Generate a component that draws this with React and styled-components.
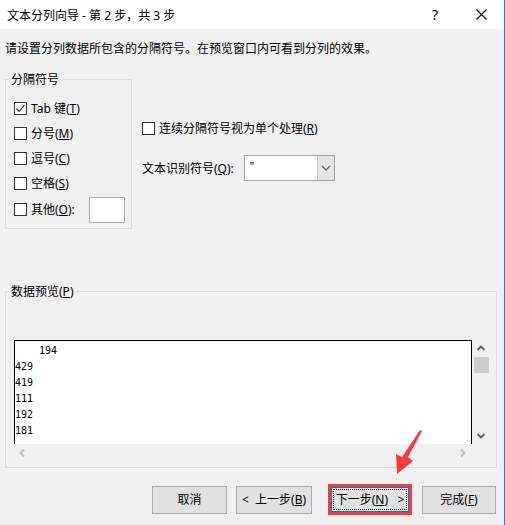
import styled, { createGlobalStyle } from 'styled-components';

const GlobalStyle = createGlobalStyle`
  html, body {
    margin: 0;
    padding: 0;
    background: #ffffff;
  }
  body {
    font-family: "Noto Sans", "Noto Sans CJK SC", sans-serif;
    font-size: 12px;
    color: #000;
  }
`;

const Window = styled.div`
  position: relative;
  width: 504px;
  height: 525px;
  background: #f0f0f0;
  border-right: 1px solid #1883d7;
  display: flex;
  flex-direction: column;
  overflow: hidden;
`;

const TitleBar = styled.div`
  height: 29px;
  background: #ffffff;
  display: flex;
  align-items: center;
  padding-left: 7px;
  line-height: 17px;
`;

const TitleText = styled.div`
  flex: 1;
  padding-top: 1px;
`;

const TitleButton = styled.div`
  width: ${({ $w }) => $w}px;
  display: flex;
  justify-content: center;
  align-items: center;
  font-size: 14px;
`;

const Body = styled.div`
  flex: 1;
  display: flex;
  flex-direction: column;
  padding: 0 7px 0 5px;
`;

const Intro = styled.div`
  margin-top: 11px;
  line-height: 17px;
`;

const TopSection = styled.div`
  display: flex;
  margin-top: 14px;
`;

const Group = styled.fieldset`
  margin: 0;
  padding: ${({ $pad }) => $pad};
  border: 1px solid #dcdcdc;
  min-inline-size: 0;
  width: ${({ $w }) => $w};
  box-sizing: border-box;
`;

const Legend = styled.legend`
  padding: 0 2px;
  margin-left: -5px;
  line-height: 17px;
`;

const OptionList = styled.div`
  display: flex;
  flex-direction: column;
  padding-top: 8px;
`;

const OptionRow = styled.label`
  display: flex;
  align-items: center;
  height: ${({ $h }) => $h || 25}px;
  gap: 4px;
  line-height: 17px;
`;

const Box = styled.span`
  width: 13px;
  height: 13px;
  box-sizing: border-box;
  border: 1px solid #333333;
  background: #ffffff;
  display: inline-flex;
  align-items: center;
  justify-content: center;
  flex-shrink: 0;
`;

const SmallInput = styled.div`
  width: 36px;
  height: 26px;
  box-sizing: border-box;
  border: 1px solid #adadad;
  background: #ffffff;
  margin-left: auto;
  margin-right: -2px;
`;

const RightColumn = styled.div`
  margin-left: 10px;
  padding-top: 47px;
  display: flex;
  flex-direction: column;
`;

const QualifierRow = styled.div`
  display: flex;
  align-items: center;
  gap: 10px;
  margin-top: 17px;
  line-height: 17px;
`;

const Combo = styled.div`
  width: 91px;
  height: 26px;
  box-sizing: border-box;
  border: 1px solid #a0a0a0;
  background: #ffffff;
  display: flex;
`;

const ComboValue = styled.div`
  flex: 1;
  padding-left: 5px;
  line-height: 22px;
  color: #000000;
  font-family: "Liberation Sans", sans-serif;
`;

const ComboButton = styled.div`
  width: 16px;
  background: #e5e5e5;
  border-left: 1px solid #cccccc;
  display: flex;
  align-items: center;
  justify-content: center;
`;

const PreviewGroup = styled(Group)`
  margin-top: 54px;
`;

const PreviewFrame = styled.div`
  display: flex;
  flex-direction: column;
  padding-top: 40px;
`;

const PreviewMain = styled.div`
  display: flex;
  height: 104px;
`;

const DataBox = styled.div`
  flex: 1;
  background: #ffffff;
  border: 1px solid #000000;
  border-bottom: none;
  padding-top: 2px;
  font-family: "DejaVu Sans Mono", monospace;
  font-size: 10px;
  line-height: 16px;
  white-space: pre;
`;

const VScroll = styled.div`
  width: 16px;
  display: flex;
  flex-direction: column;
  align-items: center;
  padding-left: 1px;
`;

const ScrollArrow = styled.div`
  height: ${({ $h }) => $h}px;
  width: 16px;
  display: flex;
  align-items: center;
  justify-content: center;
`;

const Thumb = styled.div`
  width: 15px;
  height: 16px;
  background: #cdcdcd;
`;

const ScrollGap = styled.div`
  flex: 1;
`;

const HScroll = styled.div`
  height: 17px;
  display: flex;
  align-items: center;
  justify-content: space-between;
  padding: 0 22px 0 4px;
  margin-right: -1px;
`;

const ButtonRow = styled.div`
  display: flex;
  justify-content: flex-end;
  align-items: center;
  margin-top: 16px;
  padding-right: 1px;
`;

const Button = styled.div`
  width: ${({ $w }) => $w}px;
  height: 28px;
  box-sizing: border-box;
  background: #e1e1e1;
  border: 1px solid ${({ $default }) => ($default ? '#0078d7' : '#adadad')};
  display: flex;
  align-items: center;
  justify-content: center;
  line-height: 17px;
  white-space: pre;
  margin-left: ${({ $ml }) => $ml || 0}px;
`;

const Highlight = styled.div`
  border: 3px solid #f53a3a;
  margin-left: 16px;
  margin-right: 10px;
`;

const FocusButton = styled(Button)`
  height: 25px;
  width: 78px;
  position: relative;
  &::after {
    content: '';
    position: absolute;
    inset: 1px;
    border: 1px dotted #000000;
  }
`;

const ArrowMark = styled.svg`
  position: absolute;
  left: 390px;
  top: 428px;
`;

const Check = () => (
  <svg width="11" height="11" viewBox="0 0 11 11">
    <path d="M1.5 5.5 L4.2 8.3 L9.5 1.8" fill="none" stroke="#333" strokeWidth="1.2" />
  </svg>
);

const Chevron = ({ dir, color }) => {
  const d = {
    up: 'M1.5 6 L5 2.5 L8.5 6',
    down: 'M1.5 3 L5 6.5 L8.5 3',
    left: 'M6 1.5 L2.5 5 L6 8.5',
    right: 'M3 1.5 L6.5 5 L3 8.5',
  }[dir];
  return (
    <svg width="10" height="10" viewBox="0 0 10 10">
      <path d={d} fill="none" stroke={color} strokeWidth="2" />
    </svg>
  );
};

const CheckOption = ({ checked, children, h }) => (
  <OptionRow $h={h}>
    <Box>{checked && <Check />}</Box>
    <span>{children}</span>
  </OptionRow>
);

const rows = ['    194', '429', '419', '111', '192', '181'];

export default function App() {
  return (
    <>
      <GlobalStyle />
      <Window>
        <TitleBar>
          <TitleText>文本分列向导 - 第 2 步，共 3 步</TitleText>
          <TitleButton $w={46}>?</TitleButton>
          <TitleButton $w={46}>
            <svg width="11" height="11" viewBox="0 0 11 11">
              <path d="M0.5 0.5 L10.5 10.5 M10.5 0.5 L0.5 10.5" stroke="#000" strokeWidth="1.1" />
            </svg>
          </TitleButton>
        </TitleBar>
        <Body>
          <Intro>请设置分列数据所包含的分隔符号。在预览窗口内可看到分列的效果。</Intro>
          <TopSection>
            <Group $w="127px" $pad="0 8px 5px">
              <Legend>分隔符号</Legend>
              <OptionList>
                <CheckOption checked>Tab 键(<u>T</u>)</CheckOption>
                <CheckOption>分号(<u>M</u>)</CheckOption>
                <CheckOption>逗号(<u>C</u>)</CheckOption>
                <CheckOption>空格(<u>S</u>)</CheckOption>
                <OptionRow $h={27}>
                  <Box />
                  <span>其他(<u>O</u>):</span>
                  <SmallInput />
                </OptionRow>
              </OptionList>
            </Group>
            <RightColumn>
              <CheckOption h={20}>连续分隔符号视为单个处理(<u>R</u>)</CheckOption>
              <QualifierRow>
                <span>文本识别符号(<u>Q</u>):</span>
                <Combo>
                  <ComboValue>"</ComboValue>
                  <ComboButton>
                    <svg width="10" height="6" viewBox="0 0 10 6">
                      <path d="M1 1 L5 5 L9 1" fill="none" stroke="#606060" strokeWidth="1.2" />
                    </svg>
                  </ComboButton>
                </Combo>
              </QualifierRow>
            </RightColumn>
          </TopSection>
          <PreviewGroup $w="492px" $pad="0 7px 6px 8px">
            <Legend>数据预览(<u>P</u>)</Legend>
            <PreviewFrame>
              <PreviewMain>
                <DataBox>{rows.join('\n')}</DataBox>
                <VScroll>
                  <ScrollArrow $h={17}>
                    <Chevron dir="up" color="#606060" />
                  </ScrollArrow>
                  <Thumb />
                  <ScrollGap />
                  <ScrollArrow $h={17}>
                    <Chevron dir="down" color="#606060" />
                  </ScrollArrow>
                </VScroll>
              </PreviewMain>
              <HScroll>
                <Chevron dir="left" color="#c0c0c0" />
                <Chevron dir="right" color="#c0c0c0" />
              </HScroll>
            </PreviewFrame>
          </PreviewGroup>
          <ButtonRow>
            <Button $w={75}>取消</Button>
            <Button $w={76} $ml={9}>{'<  上一步('}<u>B</u>)</Button>
            <Highlight>
              <FocusButton $default>下一步(<u>N</u>){'   >'}</FocusButton>
            </Highlight>
            <Button $w={74}>完成(<u>F</u>)</Button>
          </ButtonRow>
        </Body>
        <ArrowMark width="40" height="50" viewBox="0 0 40 50">
          <path d="M32 3 L18 29 L23 33 L7 46 L6 26 L12 29 L30 2 Z" fill="#f53a3a" />
        </ArrowMark>
      </Window>
    </>
  );
}
